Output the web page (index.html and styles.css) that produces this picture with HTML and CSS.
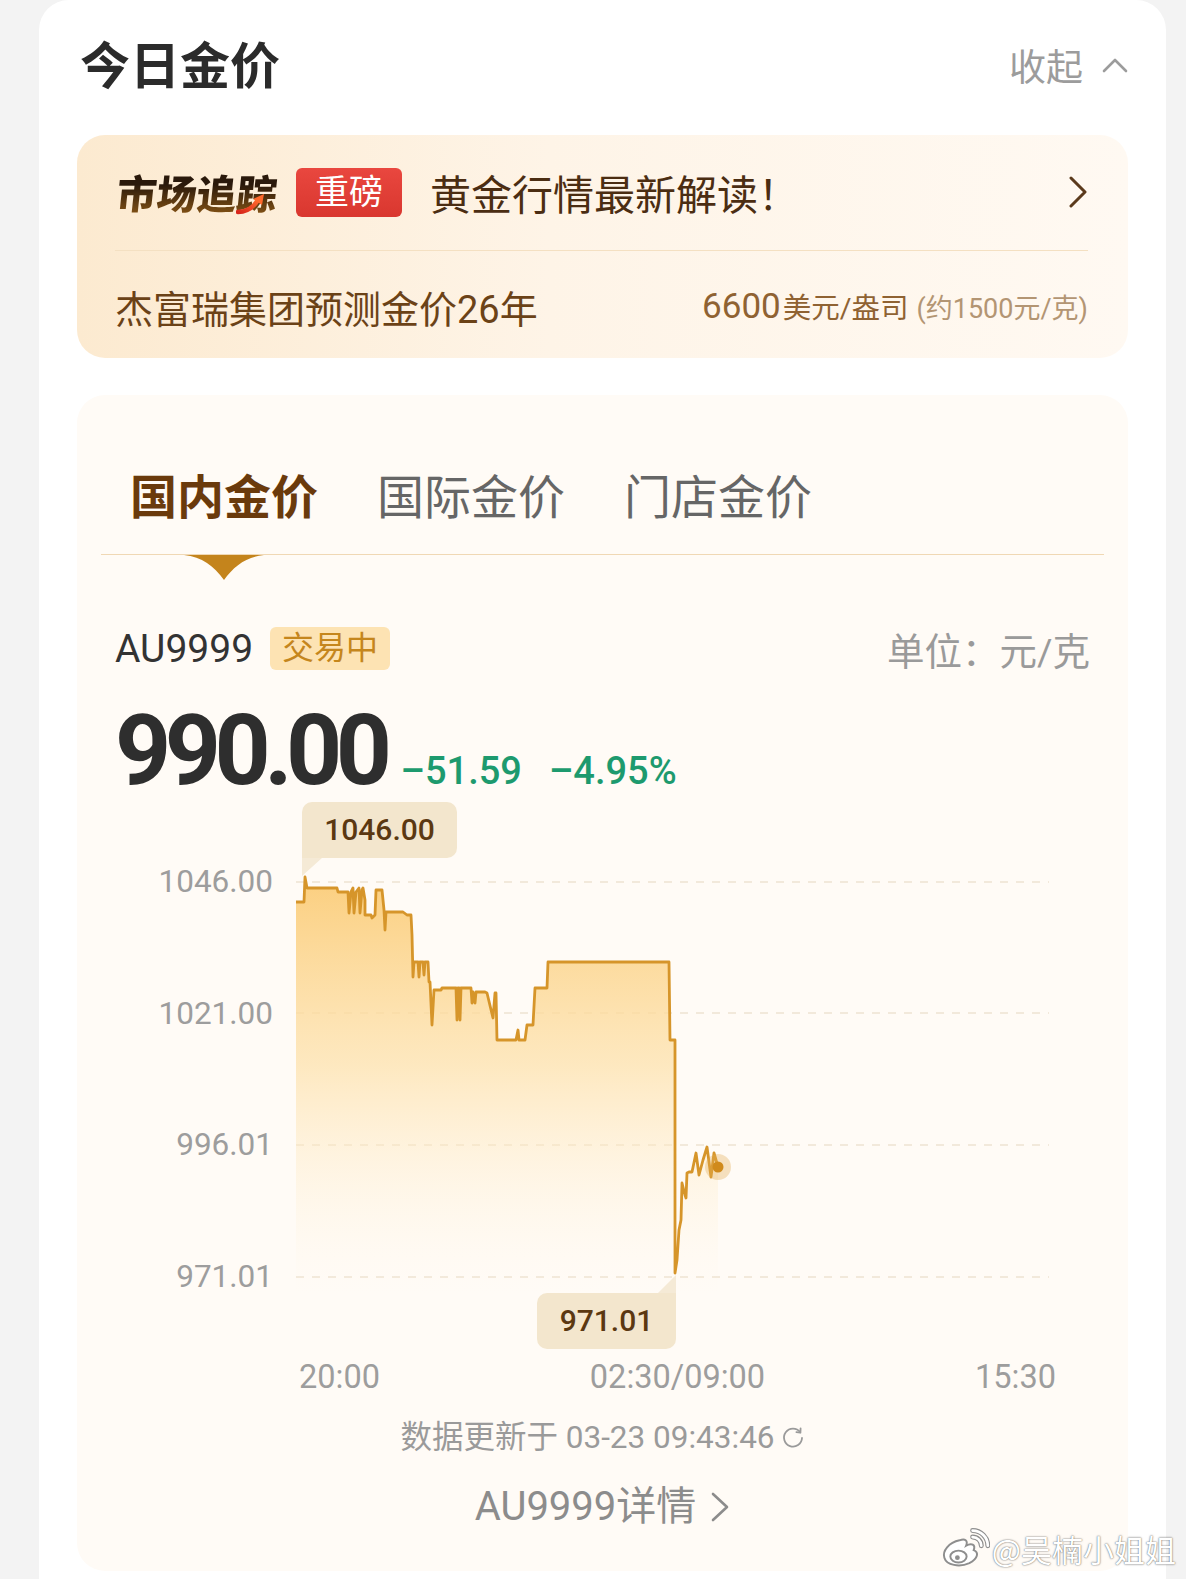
FILE: index.html
```html
<!DOCTYPE html>
<html lang="zh-CN">
<head>
  <meta charset="UTF-8">
  <meta name="viewport" content="width=device-width, initial-scale=1.0">
  <title>今日金价</title>
  <link rel="stylesheet" href="styles.css">
</head>
<body>
  <div class="card">
    <div class="head">
      <h1 class="title">今日金价</h1>
      <div class="fold">
        <span>收起</span>
        <svg width="26" height="16" viewBox="0 0 26 16"><polyline points="2,14 13,3 24,14" fill="none" stroke="#9c9c9c" stroke-width="2.6" stroke-linecap="round" stroke-linejoin="round"/></svg>
      </div>
    </div>

    <div class="news">
      <div class="news-top">
        <div class="brand">
          <span class="brand-text">市场追踪</span>
          <svg class="brand-swoosh" width="30" height="22" viewBox="0 0 30 22">
            <defs>
              <linearGradient id="swoosh" x1="0" y1="1" x2="1" y2="0">
                <stop offset="0" stop-color="#d8261c"/>
                <stop offset="1" stop-color="#ff6a2c"/>
              </linearGradient>
            </defs>
            <path d="M2,19 C10,19 17,15 22,7" fill="none" stroke="url(#swoosh)" stroke-width="4.5" stroke-linecap="round"/>
            <polygon points="17,6 28,1 26,12" fill="#ff6a2c"/>
          </svg>
        </div>
        <span class="hot">重磅</span>
        <span class="news-title">黄金行情最新解读！</span>
        <svg width="20" height="32" viewBox="0 0 20 32"><polyline points="3,2 17,16 3,30" fill="none" stroke="#5b3a1c" stroke-width="3" stroke-linecap="round" stroke-linejoin="round"/></svg>
      </div>
      <div class="news-bottom">
        <span class="news-sub">杰富瑞集团预测金价26年</span>
        <span class="forecast"><b>6600</b><span class="forecast-unit">美元/盎司</span><span class="forecast-approx">(约1500元/克)</span></span>
      </div>
    </div>

    <div class="panel">
      <div class="tabs">
        <span class="tab active">国内金价</span>
        <span class="tab">国际金价</span>
        <span class="tab">门店金价</span>
      </div>
      <svg class="tab-mark" width="80" height="25" viewBox="0 0 80 25"><path d="M0,0 H80 C62,2 50,11 40,25 C30,11 18,2 0,0 Z" fill="#c4841c"/></svg>

      <div class="quote-head">
        <div class="symbol">AU9999 <span class="status">交易中</span></div>
        <div class="unit-label">单位：元/克</div>
      </div>

      <div class="price-row">
        <span class="price">990.00</span>
        <span class="change">–51.59</span>
        <span class="change">–4.95%</span>
      </div>

      <div class="chart">
        <div class="y-axis">
          <span>1046.00</span>
          <span>1021.00</span>
          <span>996.01</span>
          <span>971.01</span>
        </div>
        <div class="plot">
          <svg viewBox="297 800 758 500" width="758" height="500">
            <defs>
              <linearGradient id="area" gradientUnits="userSpaceOnUse" x1="0" y1="877" x2="0" y2="1295">
                <stop offset="0" stop-color="#fbcc78" stop-opacity="0.95"/>
                <stop offset="0.45" stop-color="#fde0a8" stop-opacity="0.7"/>
                <stop offset="1" stop-color="#fff6e6" stop-opacity="0"/>
              </linearGradient>
            </defs>
            <g stroke="#eee3d2" stroke-width="1.5" stroke-dasharray="8 8">
              <line x1="297" y1="882" x2="1050" y2="882"/>
              <line x1="297" y1="1013" x2="1050" y2="1013"/>
              <line x1="297" y1="1145" x2="1050" y2="1145"/>
              <line x1="297" y1="1277" x2="1050" y2="1277"/>
            </g>
            <path fill="url(#area)" d="M297,902 L305,902 L306,877 L308,888 L338,888 L339,892 L349,892 L350,913 L352,892 L354,888 L355,913 L357,892 L360,888 L361,913 L363,890 L364,888 L366,900 L366,915 L372,915 L373,918 L376,915 L377,890 L383,890 L385,910 L386,930 L387,912 L404,912 L408,915 L412,915 L413,935 L414,977 L415,962 L419,962 L420,977 L421,962 L424,962 L425,975 L426,962 L429,962 L430,982 L431,982 L433,1025 L435,990 L442,990 L443,988 L457,988 L458,1020 L459,988 L460,988 L461,1020 L462,988 L472,988 L473,1003 L474,992 L476,1003 L477,992 L486,992 L488,993 L494,1018 L496,993 L497,993 L498,1040 L517,1040 L519,1030 L520,1040 L526,1040 L528,1025 L534,1025 L536,988 L548,988 L549,962 L670,962 L671,1040 L676,1040 L676,1273 L678,1260 L680,1230 L682,1220 L683,1183 L686,1195 L687,1198 L688,1173 L690,1172 L693,1172 L697,1153 L700,1175 L704,1160 L708,1147 L712,1177 L715,1153 L719,1167 L719,1300 L297,1300 Z"/>
            <path fill="none" stroke="#d6952a" stroke-width="2.8" stroke-linejoin="round" d="M297,902 L305,902 L306,877 L308,888 L338,888 L339,892 L349,892 L350,913 L352,892 L354,888 L355,913 L357,892 L360,888 L361,913 L363,890 L364,888 L366,900 L366,915 L372,915 L373,918 L376,915 L377,890 L383,890 L385,910 L386,930 L387,912 L404,912 L408,915 L412,915 L413,935 L414,977 L415,962 L419,962 L420,977 L421,962 L424,962 L425,975 L426,962 L429,962 L430,982 L431,982 L433,1025 L435,990 L442,990 L443,988 L457,988 L458,1020 L459,988 L460,988 L461,1020 L462,988 L472,988 L473,1003 L474,992 L476,1003 L477,992 L486,992 L488,993 L494,1018 L496,993 L497,993 L498,1040 L517,1040 L519,1030 L520,1040 L526,1040 L528,1025 L534,1025 L536,988 L548,988 L549,962 L670,962 L671,1040 L676,1040 L676,1273 L678,1260 L680,1230 L682,1220 L683,1183 L686,1195 L687,1198 L688,1173 L690,1172 L693,1172 L697,1153 L700,1175 L704,1160 L708,1147 L712,1177 L715,1153 L719,1167"/>
            <circle cx="719" cy="1167" r="13" fill="#e2ad52" fill-opacity="0.35"/>
            <circle cx="719" cy="1167" r="5.5" fill="#d08a1c"/>
          </svg>
          <div class="x-axis">
            <span>20:00</span>
            <span>02:30/09:00</span>
            <span>15:30</span>
          </div>
        </div>
        <div class="tip tip-high">1046.00</div>
        <div class="tip tip-low">971.01</div>
      </div>

      <div class="updated">
        <span>数据更新于 03-23 09:43:46</span>
        <svg width="24" height="24" viewBox="0 0 24 24"><path d="M19.2,6.2 A9,9 0 1 0 21,12" fill="none" stroke="#9a9a9a" stroke-width="1.8" stroke-linecap="round"/><polyline points="19.6,2.4 19.4,6.6 15.4,6.2" fill="none" stroke="#9a9a9a" stroke-width="1.8" stroke-linecap="round" stroke-linejoin="round"/></svg>
      </div>
      <div class="detail">
        <span>AU9999详情</span>
        <svg width="20" height="32" viewBox="0 0 20 32"><polyline points="3,3 17,16 3,29" fill="none" stroke="#8c8c8c" stroke-width="2.6" stroke-linecap="round" stroke-linejoin="round"/></svg>
      </div>
    </div>
  </div>

  <div class="watermark">
    <svg width="50" height="42" viewBox="0 0 46 38">
      <path d="M18,11 C8,13 2,21 4,27 C6,34 18,36 27,32 C35,28 36,22 31,20 C33,15 29,13 24,16 C26,11 23,9 18,11 Z" fill="#fff" stroke="#8e8e8e" stroke-width="1.8"/>
      <ellipse cx="17" cy="26" rx="7.5" ry="5.5" fill="none" stroke="#8e8e8e" stroke-width="1.8"/>
      <circle cx="16" cy="27" r="2.2" fill="#8e8e8e"/>
      <path d="M30,8 A8,8 0 0 1 38,16" fill="none" stroke="#8e8e8e" stroke-width="4.5" stroke-linecap="round"/>
      <path d="M30,8 A8,8 0 0 1 38,16" fill="none" stroke="#fff" stroke-width="2.5" stroke-linecap="round"/>
      <path d="M30,2 A14,14 0 0 1 44,16" fill="none" stroke="#8e8e8e" stroke-width="4.5" stroke-linecap="round"/>
      <path d="M30,2 A14,14 0 0 1 44,16" fill="none" stroke="#fff" stroke-width="2.5" stroke-linecap="round"/>
    </svg>
    <span>@吴楠小姐姐</span>
  </div>
</body>
</html>
```

FILE: styles.css
```css
body {
  margin: 0;
  position: relative;
  background: #f3f3f3;
  font-family: Roboto, "Noto Sans CJK SC", sans-serif;
}

.card {
  margin: 0 20px 0 39px;
  padding: 32px 38px 60px;
  background: #fff;
  border-radius: 30px 30px 0 0;
}

.head {
  display: flex;
  justify-content: space-between;
  align-items: center;
  height: 60px;
}

.title {
  margin: 0 0 0 3px;
  font-family: "Noto Sans CJK SC", sans-serif;
  font-size: 50px;
  line-height: 60px;
  font-weight: 700;
  color: #2b2b2b;
}

.fold {
  display: flex;
  align-items: center;
  gap: 19px;
  margin-top: 6px;
  font-size: 37px;
  color: #9c9c9c;
}

/* news banner */
.news {
  margin-top: 43px;
  padding: 0 40px 0 38px;
  border-radius: 28px;
  background: linear-gradient(90deg, #fcead0 0%, #fef4e7 45%, #fff9f2 100%);
}

.news-top {
  display: flex;
  align-items: center;
  height: 50px;
  padding: 32px 0 33px;
  border-bottom: 1.5px solid #f4e0c2;
}

.brand {
  position: relative;
  margin-left: 2px;
}

.brand-text {
  display: inline-block;
  font-family: "Noto Sans CJK SC", sans-serif;
  font-size: 40px;
  line-height: 50px;
  font-weight: 900;
  transform: skewX(-6deg);
  background: linear-gradient(180deg, #2a190b 35%, #8a5716 100%);
  -webkit-background-clip: text;
  background-clip: text;
  color: transparent;
}

.brand-swoosh {
  position: absolute;
  left: 119px;
  top: 26px;
}

.hot {
  margin-left: 19px;
  padding: 0 19px;
  height: 49px;
  line-height: 49px;
  border-radius: 6px;
  background: linear-gradient(180deg, #e9473f, #d9372f);
  color: #fff;
  font-size: 34px;
}

.news-title {
  flex: 1;
  margin-left: 28px;
  font-size: 41px;
  color: #4b2d12;
}

.news-bottom {
  display: flex;
  justify-content: space-between;
  align-items: center;
  height: 50px;
  padding: 30px 0 27px;
}

.news-sub {
  font-size: 38px;
  color: #6b4217;
}

.forecast {
  display: flex;
  align-items: baseline;
  color: #8f6232;
}

.forecast b {
  font-size: 35px;
  font-weight: 400;
}

.forecast-unit {
  margin-left: 2px;
  font-size: 28.5px;
}

.forecast-approx {
  margin-left: 8px;
  font-size: 27px;
  color: #b39573;
}

/* price panel */
.panel {
  margin-top: 37px;
  padding: 69px 24px 39px;
  border-radius: 28px;
  background: #fffbf6;
}

.tabs {
  display: flex;
  gap: 59px;
  padding: 0 0 30px 29px;
  border-bottom: 1.5px solid #f0d8b4;
}

.tab {
  font-family: "Noto Sans CJK SC", sans-serif;
  font-size: 47px;
  line-height: 60px;
  color: #666;
}

.tab.active {
  font-weight: 700;
  color: #6a3a0c;
}

.tab-mark {
  display: block;
  margin-left: 83px;
}

.quote-head {
  display: flex;
  justify-content: space-between;
  align-items: center;
  height: 43px;
  margin-top: 47px;
  padding: 0 14px;
}

.symbol {
  display: flex;
  align-items: center;
  gap: 17px;
  font-size: 39px;
  color: #333;
}

.status {
  padding: 0 12px;
  line-height: 43px;
  border-radius: 6px;
  background: #fde3b3;
  color: #c5861c;
  font-size: 32px;
}

.unit-label {
  font-size: 37.5px;
  color: #9a9a9a;
}

.price-row {
  display: flex;
  align-items: baseline;
  height: 98px;
  margin-top: 32px;
  padding: 0 14px;
}

.price {
  font-size: 98px;
  line-height: 98px;
  font-weight: 700;
  letter-spacing: -6.5px;
  color: #2e2e2e;
}

.change {
  margin-left: 15px;
  font-size: 38px;
  line-height: 38px;
  font-weight: 500;
  color: #1d9a6e;
}

.change + .change {
  margin-left: 27px;
}

/* chart */
.chart {
  position: relative;
  display: grid;
  grid-template-columns: 172px 758px;
  column-gap: 23px;
}

.y-axis {
  display: flex;
  flex-direction: column;
  align-items: flex-end;
  gap: 91.7px;
  padding-top: 62px;
  font-size: 31.5px;
  line-height: 40px;
  color: #9d9d9d;
}

.plot svg {
  display: block;
}

.x-axis {
  display: flex;
  justify-content: space-between;
  margin-top: 57px;
  padding: 0 0 0 3px;
  margin-right: -2px;
  font-size: 32.5px;
  line-height: 40px;
  color: #9d9d9d;
}

.tip {
  position: absolute;
  height: 56px;
  line-height: 56px;
  border-radius: 10px;
  background: #f3e6cd;
  color: #5b3811;
  font-size: 30px;
  font-weight: 500;
  text-align: center;
}

.tip-high {
  left: 201px;
  top: 2px;
  width: 155px;
  border-bottom-left-radius: 0;
}

.tip-high::after {
  content: "";
  position: absolute;
  left: 0;
  top: 56px;
  border-top: 18px solid #f5ead6;
  border-right: 20px solid transparent;
}

.tip-low {
  left: 436px;
  top: 493px;
  width: 139px;
  border-top-right-radius: 0;
}

.tip-low::before {
  content: "";
  position: absolute;
  right: 0;
  top: -18px;
  border-bottom: 18px solid #f5ead6;
  border-left: 18px solid transparent;
}

.updated {
  display: flex;
  justify-content: center;
  align-items: center;
  gap: 6px;
  margin-top: 21px;
  font-size: 31.5px;
  line-height: 40px;
  color: #9a9a9a;
}

.detail {
  display: flex;
  justify-content: center;
  align-items: center;
  gap: 14px;
  margin-top: 24px;
  font-size: 40px;
  line-height: 50px;
  color: #8c8c8c;
}

.watermark {
  position: absolute;
  top: 1526px;
  right: 10px;
  display: flex;
  align-items: center;
  gap: 2px;
  font-family: "Noto Sans CJK SC", sans-serif;
  font-size: 31px;
  color: #fff;
  text-shadow: 0 0 2px rgba(0, 0, 0, 0.5), 0 0 1px rgba(0, 0, 0, 0.4);
}
```
